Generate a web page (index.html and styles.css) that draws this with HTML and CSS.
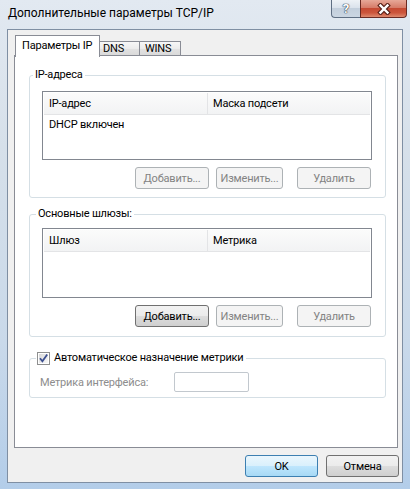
FILE: index.html
```html
<!DOCTYPE html>
<html lang="ru">
  <head>
    <meta charset="UTF-8" />
    <meta name="viewport" content="width=device-width, initial-scale=1">
    <title>Дополнительные параметры TCP/IP</title>
    <link rel="stylesheet" href="styles.css">
  </head>
  <body>
    <div class="window">
      <div class="titlebar">
        <p class="title">Дополнительные параметры TCP/IP</p>
        <div class="caption_btns">
          <span class="cap_btn help">?</span>
          <span class="cap_btn close">
            <svg width="14" height="12" viewBox="0 0 14 12">
              <path d="M3.5 2.5 L10.5 9.5 M10.5 2.5 L3.5 9.5" stroke="#5a2219" stroke-width="4.6" stroke-linecap="square" fill="none"/>
              <path d="M3.5 2.5 L10.5 9.5 M10.5 2.5 L3.5 9.5" stroke="#fff" stroke-width="2.4" stroke-linecap="square" fill="none"/>
            </svg>
          </span>
        </div>
      </div>

      <div class="client">
        <div class="tabs">
          <span class="tab on">Параметры IP</span>
          <span class="tab dns">DNS</span>
          <span class="tab wins">WINS</span>
        </div>

        <div class="panel">
          <!-- IP-адреса -->
          <fieldset class="group">
            <legend class="group_tit">IP-адреса</legend>
            <div class="group_body">
              <div class="list list_ip">
                <div class="list_head">
                  <span class="col1">IP-адрес</span>
                  <span class="col2">Маска подсети</span>
                </div>
                <div class="list_row">DHCP включен</div>
              </div>
              <div class="btn_row">
                <button class="btn btn_add" disabled>Добавить...</button>
                <button class="btn btn_edit" disabled>Изменить...</button>
                <button class="btn btn_del" disabled>Удалить</button>
              </div>
            </div>
          </fieldset>

          <!-- шлюзы -->
          <fieldset class="group group_gw">
            <legend class="group_tit">Основные шлюзы:</legend>
            <div class="group_body">
              <div class="list list_gw">
                <div class="list_head">
                  <span class="col1">Шлюз</span>
                  <span class="col2">Метрика</span>
                </div>
              </div>
              <div class="btn_row">
                <button class="btn btn_add">Добавить...</button>
                <button class="btn btn_edit" disabled>Изменить...</button>
                <button class="btn btn_del" disabled>Удалить</button>
              </div>
            </div>
          </fieldset>

          <!-- метрика -->
          <fieldset class="group group_metric">
            <legend class="group_tit check_tit">
              <svg class="chk" width="13" height="13" viewBox="0 0 13 13">
                <defs>
                  <linearGradient id="chkbg" x1="0" y1="0" x2="1" y2="1">
                    <stop offset="0" stop-color="#d9d9d9"/>
                    <stop offset="1" stop-color="#f8f8f8"/>
                  </linearGradient>
                </defs>
                <rect x="0.5" y="0.5" width="12" height="12" fill="#fff" stroke="#8e8f8f"/>
                <rect x="2" y="2" width="9" height="9" fill="url(#chkbg)"/>
                <path d="M3 6.3 L5.4 9.3 L10.2 2.4" stroke="#3c4f8f" stroke-width="1.8" fill="none"/>
              </svg>
              <span>Автоматическое назначение метрики</span>
            </legend>
            <div class="group_body metric_row">
              <span class="metric_lbl">Метрика интерфейса:</span>
              <span class="metric_input"></span>
            </div>
          </fieldset>
        </div>

        <div class="footer">
          <button class="btn btn_ok">OK</button>
          <button class="btn btn_cancel">Отмена</button>
        </div>
      </div>
    </div>
  </body>
</html>
```

FILE: styles.css
```css
* {padding:0; margin:0; box-sizing: border-box;}
html, body {width: 410px; height: 489px; overflow: hidden;}
body {font-family: Roboto, "Noto Sans", sans-serif; font-size: 11px; letter-spacing: -0.2px; color: #000;}

.window {width: 410px; height: 489px; display: flex; flex-direction: column; padding: 0 7px 6px; background: linear-gradient(to bottom, #e2e9f1 0, #d6e0ea 30%, #c9d9ea 70%, #b3cde9 100%);}

/* title bar */
.titlebar {height: 29px; margin: 0 -7px; padding: 0 3px 0 8px; display: flex; align-items: flex-start;}
.title {padding-top: 5px; line-height: 16px; font-size: 12px; letter-spacing: 0;}
.caption_btns {margin-left: auto; display: flex;}
.cap_btn {height: 18px; display: flex; align-items: center; justify-content: center; border: 1px solid #5f6f83; border-top: none;}
.cap_btn.help {width: 29px; border-right: none; border-radius: 0 0 0 4px; color: #fff; font-weight: bold; font-size: 13px; text-shadow: 0 0 1px #2f3e50, 0 0 1px #2f3e50, 0 0 1px #2f3e50; background: linear-gradient(to bottom, #eef2f6 0, #dbe3ec 45%, #c3cfdc 50%, #cbd6e2 100%);}
.cap_btn.close {width: 47px; border-color: #6a2a22; border-radius: 0 0 4px 0; background: linear-gradient(to bottom, #e7a898 0, #d67c69 45%, #c54a33 50%, #cc553b 75%, #de8a6e 100%);}

/* client area */
.client {flex: 1; display: flex; flex-direction: column; background: #f0f0f0; border: 1px solid #7f8fa3;}

.tabs {height: 22px; margin: 5px 0 0 7px; display: flex; align-items: flex-start; position: relative; z-index: 1;}
.tab {height: 14px; margin-top: 6px; padding-left: 3px; line-height: 13px; white-space: nowrap; border: 1px solid #898c95; border-bottom: none; border-left: none; background: linear-gradient(to bottom, #f7f7f7 0, #ececec 50%, #e2e2e2 51%, #dadada 100%);}
.tab.on {width: 85px; height: 22px; margin-top: 0; padding-left: 6px; line-height: 20px; border-left: 1px solid #898c95; background: #fff;}
.tab.dns {width: 40px;}
.tab.wins {width: 41px; padding-left: 5px;}

.panel {flex: 1; margin: -2px 4px 0 6px; padding: 11px 11px 0 14px; background: #fff; border: 1px solid #898c95;}

/* group boxes */
.group {border: 1px solid #d5dfe5; border-radius: 3px; padding: 0; min-width: 0;}
.group_tit {margin-left: 3px; padding: 0 2px; line-height: 16px;}
.group_gw {margin-top: 8px;}
.group_gw .group_tit {margin-left: 6px;}
.group_body {padding: 8px 13px 8px 12px;}
.group_gw .group_body {padding: 6px 13px 9px 12px;}

.list {border: 1px solid #828790; padding: 1px; background: #fff;}
.list_ip {height: 69px;}
.list_gw {height: 70px;}
.list_head {height: 22px; display: flex; line-height: 21px; background: linear-gradient(to bottom, #fbfbfb 0, #f2f3f4 100%); border-bottom: 1px solid #e3e4e6;}
.list_head .col1 {width: 164px; padding-left: 5px; border-right: 1px solid #e3e4e6;}
.list_head .col2 {padding-left: 5px;}
.list_row {line-height: 20px; padding-left: 5px;}

.btn_row {margin: 7px 1px 0 0; display: flex; justify-content: flex-end;}
.btn {height: 22px; padding: 0; font-family: inherit; font-size: 11px; letter-spacing: inherit; color: #000; border: 1px solid #707070; border-radius: 3px; background: linear-gradient(to bottom, #f2f2f2 0, #ebebeb 50%, #dddddd 51%, #cfcfcf 100%);}
.btn:disabled {color: #838383; border-color: #adb2b5; background: #f4f4f4;}
.btn_add {width: 74px;}
.btn_edit {width: 67px; margin-left: 7px;}
.btn_del {width: 74px; margin-left: 14px;}

/* metric */
.group_metric {margin-top: 13px;}
.check_tit {margin-left: 6px; padding: 0 3px 0 1px; display: flex; align-items: center; gap: 4px;}
.chk {display: block;}
.metric_row {padding: 6px 0 5px 10px; display: flex; align-items: center;}
.metric_lbl {width: 134px; color: #8d8d8d;}
.metric_input {width: 75px; height: 20px; border: 1px solid #c2c8ce; border-radius: 2px; background: #fff;}

/* bottom buttons */
.footer {padding: 7px 3px 5px 0; display: flex; justify-content: flex-end; gap: 8px;}
.footer .btn {width: 73px;}
.btn_ok {border-color: #3c7fb1; background: linear-gradient(to bottom, #eaf6fd 0, #d9f0fc 50%, #bee6fd 51%, #a7d9f5 100%);}
```
